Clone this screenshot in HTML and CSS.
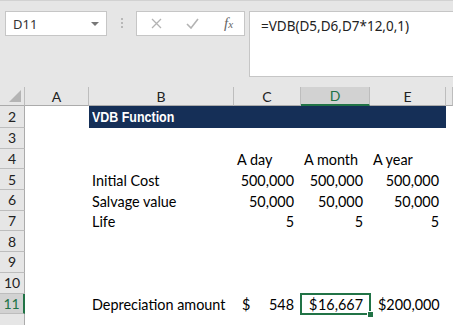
FILE: index.html
```html
<!DOCTYPE html>
<html lang="en">
<head>
    <meta charset="UTF-8">
    <title>VDB Function</title>
    <link rel="stylesheet" href="styles.css">
</head>
<body>

    <div class="bar">
        <div class="namebox">
            <span class="ref">D11</span>
            <span class="caret"></span>
        </div>
        <div class="grip"><i></i><i></i><i></i></div>
        <div class="fxbox">
            <svg class="ico" width="11" height="11" viewBox="0 0 11 11"><path d="M1 1L10 10M10 1L1 10" stroke="#b3b3b3" stroke-width="1.3" fill="none"/></svg>
            <svg class="ico check" width="13" height="11" viewBox="0 0 13 11"><path d="M1 6L5 10L12 1" stroke="#b3b3b3" stroke-width="1.6" fill="none"/></svg>
            <span class="fx">f<span class="x">x</span></span>
        </div>
        <div class="formula">=VDB(D5,D6,D7*12,0,1)</div>
    </div>

    <div class="sheet">
        <div class="row head">
            <div class="corner"><span class="tri"></span></div>
            <div class="colh">A</div>
            <div class="colh">B</div>
            <div class="colh">C</div>
            <div class="colh sel">D</div>
            <div class="colh">E</div>
            <div class="colh"></div>
        </div>

        <div class="row tall">
            <div class="rowh">2</div>
            <div class="cell"></div>
            <div class="cell title"><span>VDB Function</span></div>
            <div class="cell"></div>
        </div>

        <div class="row">
            <div class="rowh">3</div>
        </div>

        <div class="row">
            <div class="rowh">4</div>
            <div class="cell"></div>
            <div class="cell"></div>
            <div class="cell">A day</div>
            <div class="cell">A month</div>
            <div class="cell">A year</div>
        </div>

        <div class="row">
            <div class="rowh">5</div>
            <div class="cell"></div>
            <div class="cell">Initial Cost</div>
            <div class="cell num">500,000</div>
            <div class="cell num">500,000</div>
            <div class="cell num">500,000</div>
        </div>

        <div class="row">
            <div class="rowh">6</div>
            <div class="cell"></div>
            <div class="cell">Salvage value</div>
            <div class="cell num">50,000</div>
            <div class="cell num">50,000</div>
            <div class="cell num">50,000</div>
        </div>

        <div class="row">
            <div class="rowh">7</div>
            <div class="cell"></div>
            <div class="cell">Life</div>
            <div class="cell num">5</div>
            <div class="cell num">5</div>
            <div class="cell num">5</div>
        </div>

        <div class="row">
            <div class="rowh">8</div>
        </div>
        <div class="row">
            <div class="rowh">9</div>
        </div>
        <div class="row">
            <div class="rowh">10</div>
        </div>

        <div class="row">
            <div class="rowh sel">11</div>
            <div class="cell"></div>
            <div class="cell">Depreciation amount</div>
            <div class="cell acct"><span>$</span><span>548</span></div>
            <div class="cell acct active"><span>$</span><span>16,667</span></div>
            <div class="cell acct"><span>$</span><span>200,000</span></div>
        </div>

        <div class="row">
            <div class="rowh"></div>
        </div>
    </div>

</body>
</html>
```

FILE: styles.css
```css
body{
    margin: 0;
    background: #ffffff;
    font-family: Lato, "Open Sans", sans-serif;
    overflow: hidden;
}
.bar{
    height: 87px;
    box-sizing: border-box;
    background: #e6e6e6;
    border-top: 1px solid #d2d2d2;
    padding: 10px 0 0 5px;
    display: flex;
    align-items: flex-start;
}
.namebox{
    width: 102px;
    height: 25px;
    box-sizing: border-box;
    background: #fff;
    border: 1px solid #c6c6c6;
    display: flex;
    align-items: center;
    justify-content: space-between;
    padding: 0 7px 0 7px;
}
.ref{
    font-family: "Noto Sans", sans-serif;
    font-size: 13px;
    color: #333;
}
.caret{
    width: 0;
    height: 0;
    border-left: 4px solid transparent;
    border-right: 4px solid transparent;
    border-top: 4px solid #777;
}
.grip{
    margin: 7px 0 0 14px;
    width: 2px;
    display: flex;
    flex-direction: column;
    gap: 2px;
}
.grip i{
    width: 2px;
    height: 2px;
    background: #b8b8b8;
}
.fxbox{
    margin-left: 13px;
    width: 109px;
    height: 25px;
    box-sizing: border-box;
    background: #fff;
    border: 1px solid #c6c6c6;
    display: flex;
    align-items: center;
    padding-left: 14px;
}
.check{
    margin-left: 24px;
}
.fx{
    margin-left: 25px;
    font-family: "Liberation Serif", serif;
    font-style: italic;
    font-size: 15px;
    color: #666;
}
.fx .x{
    font-size: 11px;
}
.formula{
    margin-left: 4px;
    flex: 1;
    height: 66px;
    box-sizing: border-box;
    background: #fff;
    border: 1px solid #c6c6c6;
    border-right: none;
    padding: 5px 0 0 11px;
    font-family: "Noto Sans", sans-serif;
    font-size: 13.5px;
    color: #222;
}
.row{
    display: grid;
    grid-template-columns: 25px 64px 145px 67px 69px 76px 1fr;
    height: 20.7px;
}
.row.tall{
    height: 22px;
}
.row.head{
    height: 19px;
}
.corner, .colh, .rowh{
    background: #e6e6e6;
    box-sizing: border-box;
    color: #222;
    font-size: 14px;
    display: flex;
    align-items: center;
    justify-content: center;
}
.corner{
    border-right: 1px solid #bdbdbd;
    border-bottom: 1px solid #ababab;
    align-items: flex-end;
    justify-content: flex-end;
    padding: 0 3px 3px 0;
}
.tri{
    width: 0;
    height: 0;
    border-left: 12px solid transparent;
    border-bottom: 12px solid #b4b4b4;
}
.colh{
    border-right: 1px solid #bdbdbd;
    border-bottom: 1px solid #ababab;
}
.colh.sel{
    background: #d2d2d2;
    color: #217346;
    border-bottom: 2px solid #217346;
}
.rowh{
    border-right: 1px solid #ababab;
    border-bottom: 1px solid #bdbdbd;
}
.rowh.sel{
    background: #d2d2d2;
    color: #217346;
    border-right: 2px solid #217346;
}
.cell{
    font-size: 14.4px;
    color: #000;
    display: flex;
    align-items: flex-end;
    padding: 0 0 1px 3px;
    white-space: nowrap;
}
.cell.num{
    justify-content: flex-end;
    padding-right: 7px;
}
.cell.acct{
    justify-content: space-between;
    padding: 0 7px 1px 8px;
}
.cell.title{
    grid-column: span 4;
    background: #152f57;
    color: #fff;
    font-family: "Liberation Sans", Arial, sans-serif;
    font-weight: bold;
    font-size: 15px;
    align-items: center;
}
.title span{
    display: inline-block;
    transform: scaleX(0.83);
    transform-origin: left center;
}
.cell.active{
    position: relative;
}
.cell.active::after{
    content: "";
    position: absolute;
    left: -1px;
    top: -1px;
    right: -1px;
    bottom: -1px;
    border: 2px solid #217346;
}
.cell.active::before{
    content: "";
    position: absolute;
    right: -4px;
    bottom: -4px;
    width: 5px;
    height: 5px;
    background: #217346;
    border: 1px solid #fff;
    z-index: 1;
}
```
